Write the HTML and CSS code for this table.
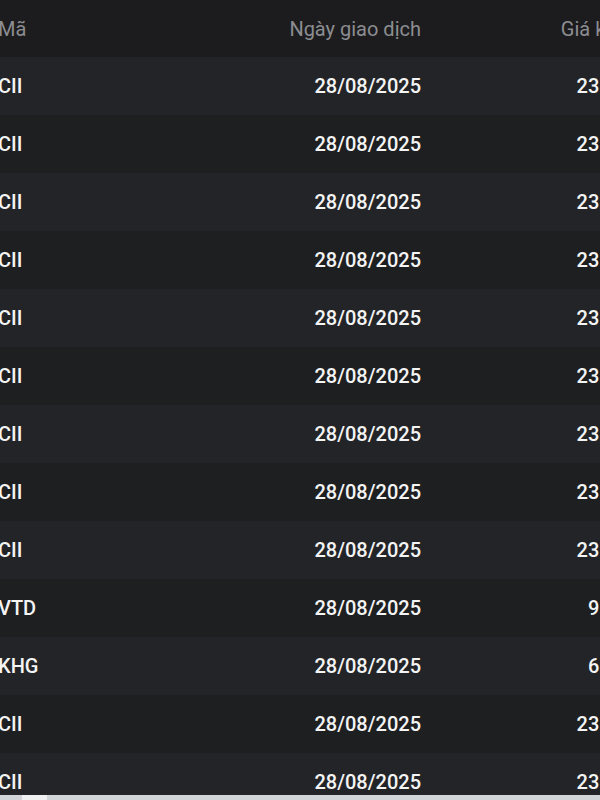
FILE: index.html
```html
<!DOCTYPE html>
<html lang="vi">
<head>
<meta charset="utf-8">
<link rel="stylesheet" href="styles.css">
</head>
<body>
<div class="viewport">
  <table class="grid">
    <colgroup>
      <col class="c-code"><col class="c-date"><col class="c-price">
    </colgroup>
    <thead>
      <tr><th class="left">Mã</th><th>Ngày giao dịch</th><th>Giá khớp</th></tr>
    </thead>
    <tbody>
      <tr><td class="left">CII</td><td>28/08/2025</td><td>23.650</td></tr>
      <tr><td class="left">CII</td><td>28/08/2025</td><td>23.650</td></tr>
      <tr><td class="left">CII</td><td>28/08/2025</td><td>23.650</td></tr>
      <tr><td class="left">CII</td><td>28/08/2025</td><td>23.650</td></tr>
      <tr><td class="left">CII</td><td>28/08/2025</td><td>23.650</td></tr>
      <tr><td class="left">CII</td><td>28/08/2025</td><td>23.650</td></tr>
      <tr><td class="left">CII</td><td>28/08/2025</td><td>23.650</td></tr>
      <tr><td class="left">CII</td><td>28/08/2025</td><td>23.650</td></tr>
      <tr><td class="left">CII</td><td>28/08/2025</td><td>23.650</td></tr>
      <tr><td class="left">VTD</td><td>28/08/2025</td><td>9.880</td></tr>
      <tr><td class="left">KHG</td><td>28/08/2025</td><td>6.720</td></tr>
      <tr><td class="left">CII</td><td>28/08/2025</td><td>23.650</td></tr>
      <tr><td class="left">CII</td><td>28/08/2025</td><td>23.650</td></tr>
    </tbody>
  </table>
</div>
<div class="scrollbar"><div class="thumb"></div></div>
</body>
</html>
```
FILE: styles.css
```css
html, body {
  margin: 0;
  padding: 0;
  width: 600px;
  height: 800px;
  overflow: hidden;
  background: #1d1e20;
  font-family: Roboto, "Liberation Sans", Arial, sans-serif;
}
.viewport {
  height: 795px;
  overflow: hidden;
}
.grid {
  border-collapse: collapse;
  table-layout: fixed;
  width: 673px;
  margin-left: -18px;
  font-size: 20px;
}
.c-code { width: 218px; }
.c-date { width: 237px; }
.c-price { width: 218px; }
.grid th, .grid td {
  padding: 0 16px;
  text-align: right;
  white-space: nowrap;
  overflow: hidden;
}
.grid th.left, .grid td.left { text-align: left; }
.grid thead tr {
  height: 57px;
  background: #1c1c1e;
}
.grid th {
  font-weight: 400;
  color: #8c8d91;
}
.grid tbody tr {
  height: 58px;
}
.grid tbody tr:nth-child(odd) { background: #232427; }
.grid tbody tr:nth-child(even) { background: #1e1f21; }
.grid td {
  font-weight: 500;
  color: #f4f4f4;
}
.scrollbar {
  height: 5px;
  background: #d2d5d8;
  display: flex;
  padding-left: 22px;
}
.thumb {
  width: 25px;
  background: #eef0f2;
}
```
